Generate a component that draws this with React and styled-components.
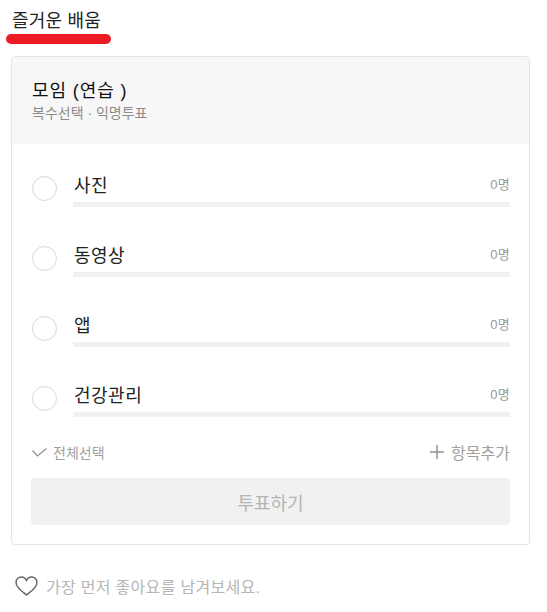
import React from "react";
import styled, { createGlobalStyle } from "styled-components";

const GlobalStyle = createGlobalStyle`
  html, body {
    margin: 0;
    padding: 0;
    background: #fff;
    font-family: "Liberation Sans", "Noto Sans CJK KR", sans-serif;
  }
`;

const Page = styled.div`
  width: 547px;
  height: 612px;
  overflow: hidden;
  padding-top: 9px;
  box-sizing: border-box;
`;

const Title = styled.div`
  margin-left: 12px;
  font-size: 18px;
  line-height: 24px;
  letter-spacing: 0.2px;
  color: #222;
  white-space: nowrap;
`;

const Underline = styled.div`
  margin: 1px 0 0 6px;
  width: 105px;
  height: 10px;
  border-radius: 5px;
  background: #ed1c24;
`;

const Card = styled.div`
  margin: 12px 0 0 11px;
  width: 519px;
  height: 489px;
  box-sizing: border-box;
  border: 1px solid #e4e4e4;
  border-radius: 4px;
  display: flex;
  flex-direction: column;
`;

const Header = styled.div`
  height: 87px;
  box-sizing: border-box;
  padding: 21px 20px 0;
  background: #f7f7f7;
`;

const PollTitle = styled.div`
  font-size: 18px;
  line-height: 27px;
  letter-spacing: 0.9px;
  color: #111;
`;

const PollMeta = styled.div`
  font-size: 14px;
  line-height: 17px;
  color: #8c8c8c;
`;

const Options = styled.div`
  padding: 18px 19px 0 20px;
  display: flex;
  flex-direction: column;
  gap: 25px;
`;

const Option = styled.div`
  display: flex;
  align-items: flex-end;
  gap: 16px;
  height: 45px;
`;

const Radio = styled.span`
  width: 25px;
  height: 25px;
  margin-bottom: 6px;
  flex: none;
  box-sizing: border-box;
  border: 1px solid #d8d8d8;
  border-radius: 50%;
  background: #fff;
`;

const OptionBody = styled.div`
  flex: 1;
`;

const OptionLine = styled.div`
  display: flex;
  justify-content: space-between;
  align-items: center;
  height: 28px;
  margin-bottom: 4px;
`;

const OptionLabel = styled.span`
  font-size: 18px;
  letter-spacing: 0.5px;
  margin-left: 1px;
  color: #222;
`;

const Count = styled.span`
  font-size: 13px;
  letter-spacing: 0.3px;
  margin-top: -2px;
  color: #999;
`;

const Bar = styled.div`
  height: 5px;
  background: #f1f1f1;
`;

const Actions = styled.div`
  display: flex;
  justify-content: space-between;
  align-items: center;
  margin: 23px 19px 0 20px;
  height: 24px;
`;

const Action = styled.span`
  display: flex;
  align-items: center;
  gap: ${(props) => props.$gap || 6}px;
  font-size: ${(props) => props.$size || 14}px;
  color: #a0a0a0;
`;

const VoteButton = styled.button`
  margin: 14px 19px 0 19px;
  height: 47px;
  border: none;
  border-radius: 4px;
  background: #f1f1f1;
  color: #b4b4b4;
  font: inherit;
  font-size: 18px;
`;

const Like = styled.div`
  display: flex;
  align-items: center;
  gap: 8px;
  margin: 29px 0 0 15px;
  font-size: 16px;
  letter-spacing: 0.3px;
  color: #b5b5b5;
`;

const options = ["사진", "동영상", "앱", "건강관리"];

const App = () => {
  return (
    <Page>
      <GlobalStyle />
      <Title>즐거운 배움</Title>
      <Underline />
      <Card>
        <Header>
          <PollTitle>모임 (연습 )</PollTitle>
          <PollMeta>복수선택 · 익명투표</PollMeta>
        </Header>
        <Options>
          {options.map((item) => (
            <Option key={item}>
              <Radio />
              <OptionBody>
                <OptionLine>
                  <OptionLabel>{item}</OptionLabel>
                  <Count>0명</Count>
                </OptionLine>
                <Bar />
              </OptionBody>
            </Option>
          ))}
        </Options>
        <Actions>
          <Action>
            <svg width="15" height="9" viewBox="0 0 15 9" fill="none" stroke="#8f8f8f" strokeWidth="1.2">
              <path d="M0.5 2.5 L5.5 8 L14.5 0.5" />
            </svg>
            전체선택
          </Action>
          <Action $size={16} $gap={7}>
            <svg width="14" height="14" viewBox="0 0 14 14" fill="none" stroke="#8f8f8f" strokeWidth="1.4">
              <path d="M7 0 V14 M0 7 H14" />
            </svg>
            항목추가
          </Action>
        </Actions>
        <VoteButton disabled>투표하기</VoteButton>
      </Card>
      <Like>
        <svg width="23" height="20" viewBox="0 0 24 21" fill="none" stroke="#666" strokeWidth="1.5">
          <path d="M12 20 C8 16.5 1 12.5 1 6.8 C1 3.5 3.5 1 6.5 1 C9 1 11 2.4 12 4.6 C13 2.4 15 1 17.5 1 C20.5 1 23 3.5 23 6.8 C23 12.5 16 16.5 12 20 Z" />
        </svg>
        가장 먼저 좋아요를 남겨보세요.
      </Like>
    </Page>
  );
};

export default App;
